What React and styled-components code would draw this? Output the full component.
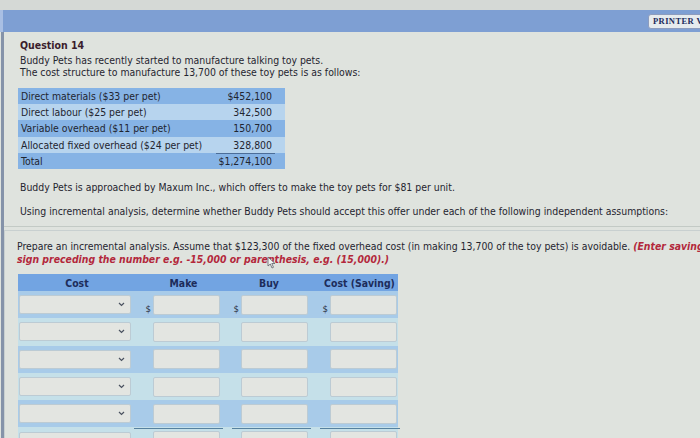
import React from "react";
import styled, { createGlobalStyle } from "styled-components";

const Global = createGlobalStyle`
  html, body { margin: 0; padding: 0; width: 700px; height: 438px; overflow: hidden; background: #dfe3de; }
  * { box-sizing: border-box; }
`;

const Page = styled.div`
  width: 780px;
  height: 438px;
  display: flex;
  flex-direction: column;
  font-family: "DejaVu Sans Condensed", "DejaVu Sans", sans-serif;
  font-stretch: condensed;
  color: #1f2530;
  background: #dfe3de;
  overflow: hidden;
`;

const TopStrip = styled.div`
  flex-shrink: 0;
  height: 10px;
  background: #d5d9d6;
`;

const HeaderBar = styled.div`
  flex-shrink: 0;
  height: 22px;
  background: #7e9fd3;
  display: flex;
  align-items: center;
  padding-left: 645px;
  border-left: 3px solid #a9bfe3;
`;

const PrinterButton = styled.div`
  height: 15px;
  padding: 0 4px;
  display: flex;
  align-items: center;
  background: #e6ebee;
  border: 1px solid #8d9cbd;
  border-radius: 3px;
  font-family: "Liberation Serif", serif;
  font-stretch: normal;
  font-weight: bold;
  font-size: 8.5px;
  letter-spacing: 0.4px;
  color: #1d2b5c;
`;

const Main = styled.div`
  flex: 1;
  min-height: 0;
  display: flex;
  flex-direction: column;
  border-left: 3px solid #8593a9;
  margin-left: 1px;
`;

const Section = styled.div`
  flex-shrink: 0;
  padding: 6px 0 0 16px;
  border-bottom: 1px solid #c3cac5;
  height: 195px;
`;

const Title = styled.div`
  font-weight: bold;
  font-size: 10.5px;
  line-height: 14px;
  color: #3a1c2c;
  margin-bottom: 3px;
`;

const Para = styled.div`
  font-size: ${(p) => p.$size || 10.4}px;
  line-height: ${(p) => p.$lh || 11.5}px;
  margin-top: ${(p) => p.$mt || 0}px;
  white-space: nowrap;
`;

const CostTable = styled.div`
  margin-top: 10px;
  margin-left: -2px;
  width: 267px;
  display: flex;
  flex-direction: column;
`;

const CostRow = styled.div`
  height: 16.2px;
  display: flex;
  align-items: center;
  justify-content: space-between;
  padding: 0 13px 0 3px;
  background: ${(p) => (p.$dark ? "#86b3e5" : "#b7d4ee")};
  font-size: 10.4px;
`;

const CostValue = styled.span`
  display: flex;
  align-items: center;
  height: 100%;
  ${(p) => p.$total && "border-top: 1px solid #4b6d99; padding-left: 2px; margin-right: -3px; padding-right: 3px;"}
`;

const Section2 = styled.div`
  margin-top: 3px;
  border-top: 1px solid #c8d0d0;
  border-left: 1px solid #c8d0d0;
  padding: 9px 0 0 12px;
  flex: 1;
  position: relative;
`;

const Red = styled.span`
  color: #b3283b;
  font-weight: bold;
  font-style: italic;
`;

const AnswerTable = styled.div`
  margin-top: 8px;
  margin-left: 1px;
  width: 380px;
  display: flex;
  flex-direction: column;
`;

const Grid = styled.div`
  flex-shrink: 0;
  display: grid;
  grid-template-columns: 118px 89px 88px 85px;
  height: ${(p) => p.$h}px;
  background: ${(p) => p.$bg};
`;

const HeadCell = styled.div`
  display: flex;
  align-items: center;
  justify-content: center;
  padding-left: ${(p) => p.$pl || 0}px;
  font-size: 10.4px;
  font-weight: bold;
  color: #1d2c5a;
`;

const Cell = styled.div`
  display: flex;
  align-items: center;
  justify-content: ${(p) => (p.$left ? "flex-start" : "flex-end")};
  padding: 0 ${(p) => p.$pr || 0}px 0 ${(p) => p.$pl || 0}px;
  gap: 2px;
  position: relative;
`;

const Underline = styled.div`
  position: absolute;
  bottom: -2px;
  left: ${(p) => p.$l}px;
  right: ${(p) => p.$r}px;
  height: 1px;
  background: #56819f;
`;

const Dollar = styled.span`
  font-size: 9.5px;
  color: #2a3040;
  align-self: flex-end;
  margin-bottom: 4px;
`;

const Input = styled.div`
  width: 67px;
  height: 20px;
  background: #e3e5e1;
  border: 1px solid #bccbd4;
  border-radius: 2px;
`;

const Select = styled.div`
  width: 112px;
  height: 19px;
  background: #e3e5e1;
  border: 1px solid #bccbd4;
  border-radius: 2px;
  display: flex;
  align-items: center;
  justify-content: flex-end;
  padding-right: 5px;
`;

const Cursor = styled.svg`
  position: absolute;
  left: 262px;
  top: 25px;
`;

const Chevron = () => (
  <svg width="7" height="5" viewBox="0 0 7 5">
    <path d="M1 1 L3.5 3.5 L6 1" fill="none" stroke="#4a5260" strokeWidth="1.2" />
  </svg>
);

const costs = [
  ["Direct materials ($33 per pet)", "$452,100"],
  ["Direct labour ($25 per pet)", "342,500"],
  ["Variable overhead ($11 per pet)", "150,700"],
  ["Allocated fixed overhead ($24 per pet)", "328,800"],
  ["Total", "$1,274,100"],
];

const rowBgs = ["#a8cbe9", "#c5e0e9", "#a8cbe9", "#c5e0e9", "#a8cbe9", "#c5e0e9"];

export default function App() {
  return (
    <Page>
      <Global />
      <TopStrip />
      <HeaderBar>
        <PrinterButton>PRINTER VERSION</PrinterButton>
      </HeaderBar>
      <Main>
        <Section>
          <Title>Question 14</Title>
          <Para>Buddy Pets has recently started to manufacture talking toy pets.</Para>
          <Para>The cost structure to manufacture 13,700 of these toy pets is as follows:</Para>
          <CostTable>
            {costs.map(([label, value], i) => (
              <CostRow key={label} $dark={i % 2 === 0}>
                <span>{label}</span>
                <CostValue $total={i === 4}>{value}</CostValue>
              </CostRow>
            ))}
          </CostTable>
          <Para $mt={13}>Buddy Pets is approached by Maxum Inc., which offers to make the toy pets for $81 per unit.</Para>
          <Para $mt={13}>Using incremental analysis, determine whether Buddy Pets should accept this offer under each of the following independent assumptions:</Para>
        </Section>
        <Section2>
          <Para $lh={13}>
            Prepare an incremental analysis. Assume that $123,300 of the fixed overhead cost (in making 13,700 of the toy pets) is avoidable.{" "}
            <Red>(Enter savings using either a negative</Red>
          </Para>
          <Para $lh={13}>
            <Red>sign preceding the number e.g. -15,000 or parenthesis, e.g. (15,000).)</Red>
          </Para>
          <Cursor width="9" height="13" viewBox="0 0 9 13">
            <path d="M1 1 L1 10 L3.3 8 L5 12 L6.5 11.3 L4.8 7.5 L8 7.5 Z" fill="#f2f4f2" stroke="#5a6068" strokeWidth="0.8" />
          </Cursor>
          <AnswerTable>
            <Grid $h={17} $bg="#72a4e2">
              <HeadCell>Cost</HeadCell>
              <HeadCell $pl={6}>Make</HeadCell>
              <HeadCell>Buy</HeadCell>
              <HeadCell $pl={8}>Cost (Saving)</HeadCell>
            </Grid>
            {rowBgs.map((bg, i) => (
              <Grid key={i} $h={27.3} $bg={bg}>
                <Cell $left $pl={1}>
                  <Select>
                    <Chevron />
                  </Select>
                </Cell>
                <Cell $pr={5}>
                  {i === 0 && <Dollar>$</Dollar>}
                  <Input />
                  {i === 4 && <Underline $l={-2} $r={2} />}
                </Cell>
                <Cell $pr={5}>
                  {i === 0 && <Dollar>$</Dollar>}
                  <Input />
                  {i === 4 && <Underline $l={7} $r={2} />}
                </Cell>
                <Cell $pr={1}>
                  {i === 0 && <Dollar>$</Dollar>}
                  <Input />
                  {i === 4 && <Underline $l={7} $r={-2} />}
                </Cell>
              </Grid>
            ))}
          </AnswerTable>
        </Section2>
      </Main>
    </Page>
  );
}
